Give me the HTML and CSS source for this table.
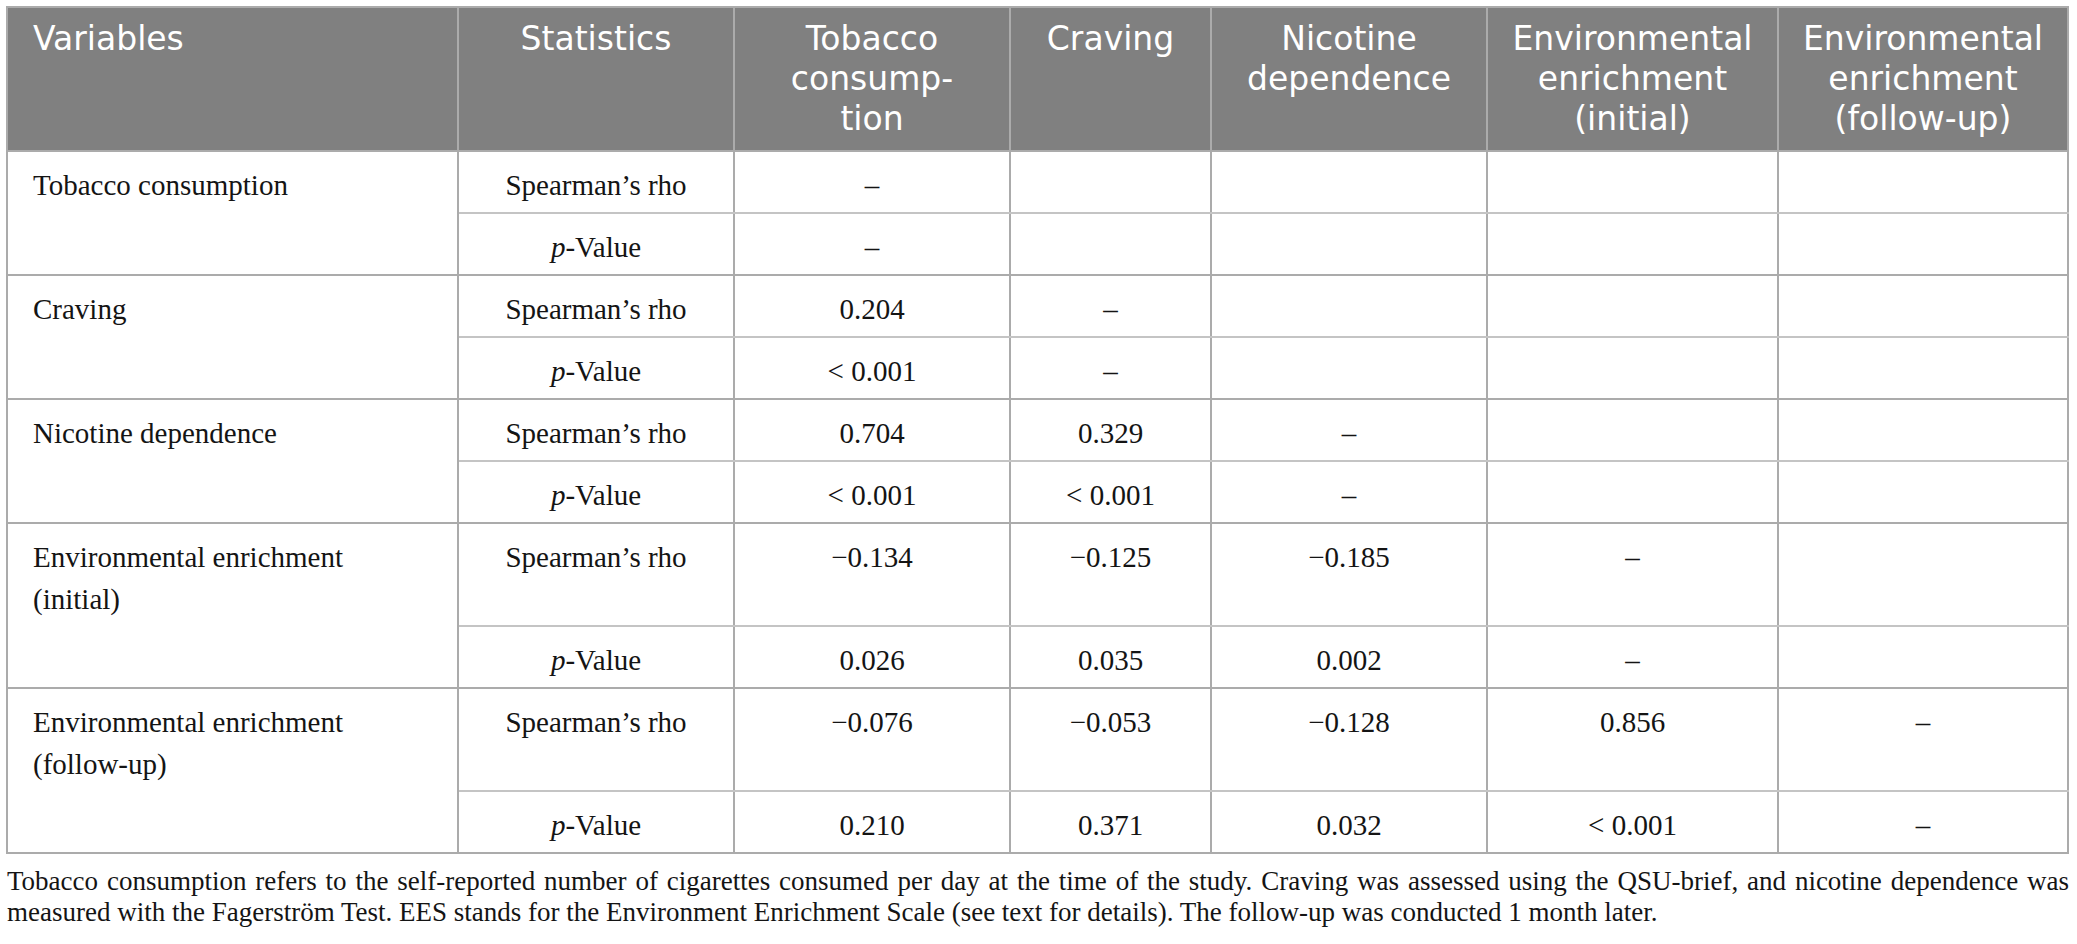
FILE: index.html
```html
<!DOCTYPE html>
<html lang="en">
<head>
  <meta charset="UTF-8" />
  <meta name="viewport" content="width=device-width, initial-scale=1.0" />
  <title>Correlations between tobacco use and environmental enrichment</title>
  <link rel="stylesheet" href="styles.css">
</head>
<body>
  <div class="page">
    <table class="corr">
      <colgroup>
        <col class="c-var">
        <col class="c-stat">
        <col class="c-tob">
        <col class="c-crav">
        <col class="c-nic">
        <col class="c-ee">
        <col>
      </colgroup>
      <thead>
        <tr>
          <th class="left">Variables</th>
          <th>Statistics</th>
          <th>Tobacco<br>consump-<br>tion</th>
          <th>Craving</th>
          <th>Nicotine<br>dependence</th>
          <th>Environmental<br>enrichment<br>(initial)</th>
          <th>Environmental<br>enrichment<br>(follow-up)</th>
        </tr>
      </thead>
      <tbody>
        <!-- tobacco -->
        <tr class="rho">
          <td class="var" rowspan="2">Tobacco consumption</td>
          <td>Spearman’s rho</td>
          <td>–</td><td></td><td></td><td></td><td></td>
        </tr>
        <tr class="pval">
          <td><i>p</i>-Value</td>
          <td>–</td><td></td><td></td><td></td><td></td>
        </tr>

        <!-- craving -->
        <tr class="rho">
          <td class="var" rowspan="2">Craving</td>
          <td>Spearman’s rho</td>
          <td>0.204</td><td>–</td><td></td><td></td><td></td>
        </tr>
        <tr class="pval">
          <td><i>p</i>-Value</td>
          <td>&lt; 0.001</td><td>–</td><td></td><td></td><td></td>
        </tr>

        <!-- nicotine -->
        <tr class="rho">
          <td class="var" rowspan="2">Nicotine dependence</td>
          <td>Spearman’s rho</td>
          <td>0.704</td><td>0.329</td><td>–</td><td></td><td></td>
        </tr>
        <tr class="pval">
          <td><i>p</i>-Value</td>
          <td>&lt; 0.001</td><td>&lt; 0.001</td><td>–</td><td></td><td></td>
        </tr>

        <!-- environmental enrichment, initial -->
        <tr class="rho tall">
          <td class="var" rowspan="2">Environmental enrichment<br>(initial)</td>
          <td>Spearman’s rho</td>
          <td>−0.134</td><td>−0.125</td><td>−0.185</td><td>–</td><td></td>
        </tr>
        <tr class="pval">
          <td><i>p</i>-Value</td>
          <td>0.026</td><td>0.035</td><td>0.002</td><td>–</td><td></td>
        </tr>

        <!-- environmental enrichment, follow-up -->
        <tr class="rho tall">
          <td class="var" rowspan="2">Environmental enrichment<br>(follow-up)</td>
          <td>Spearman’s rho</td>
          <td>−0.076</td><td>−0.053</td><td>−0.128</td><td>0.856</td><td>–</td>
        </tr>
        <tr class="pval">
          <td><i>p</i>-Value</td>
          <td>0.210</td><td>0.371</td><td>0.032</td><td>&lt; 0.001</td><td>–</td>
        </tr>
      </tbody>
    </table>

    <p class="note">
      <span class="note-line">Tobacco consumption refers to the self-reported number of cigarettes consumed per day at the time of the study. Craving was assessed using the QSU-brief, and nicotine dependence was</span>
      measured with the Fagerström Test. EES stands for the Environment Enrichment Scale (see text for details). The follow-up was conducted 1 month later.
    </p>
  </div>
</body>
</html>
```

FILE: styles.css
```css
:root {
  --head-bg: #808080;
  --line: #ababab;
  --line-soft: #c4c4c4;
  --text: #141414;
}

body {
  margin: 0;
  background: #fff;
  color: var(--text);
}

.page {
  padding: 6px 8px 0 6px;
}

.corr {
  width: 100%;
  border-collapse: collapse;
  table-layout: fixed;
  font-family: "Liberation Serif", "Times New Roman", serif;
  font-size: 29px;
}

.c-var { width: 451px; }
.c-stat { width: 276px; }
.c-tob { width: 276px; }
.c-crav { width: 201px; }
.c-nic { width: 276px; }
.c-ee { width: 291px; }

.corr th {
  background: var(--head-bg);
  color: #fff;
  font-family: "DejaVu Sans", "Open Sans", sans-serif;
  font-size: 33px;
  font-weight: 400;
  line-height: 40px;
  padding: 11px 8px 11px;
  text-align: center;
  vertical-align: top;
  border: 2px solid var(--line);
}

.corr th.left {
  text-align: left;
  padding-left: 25px;
}

.corr td {
  border: 2px solid var(--line);
  padding: 12px 10px 6px;
  line-height: 42px;
  text-align: center;
  vertical-align: top;
}

.corr td.var {
  text-align: left;
  padding-left: 25px;
}

.corr tr.rho td:not(.var) {
  border-bottom: 2px solid var(--line-soft);
}

.corr tr.tall {
  height: 103px;
}

.note {
  margin: 12px 0 0 1px;
  font-family: "Liberation Serif", "Times New Roman", serif;
  font-size: 27px;
  line-height: 31px;
  text-align: justify;
}

/* first line runs edge to edge like the printed caption */
.note-line {
  display: block;
  text-align-last: justify;
}
```
